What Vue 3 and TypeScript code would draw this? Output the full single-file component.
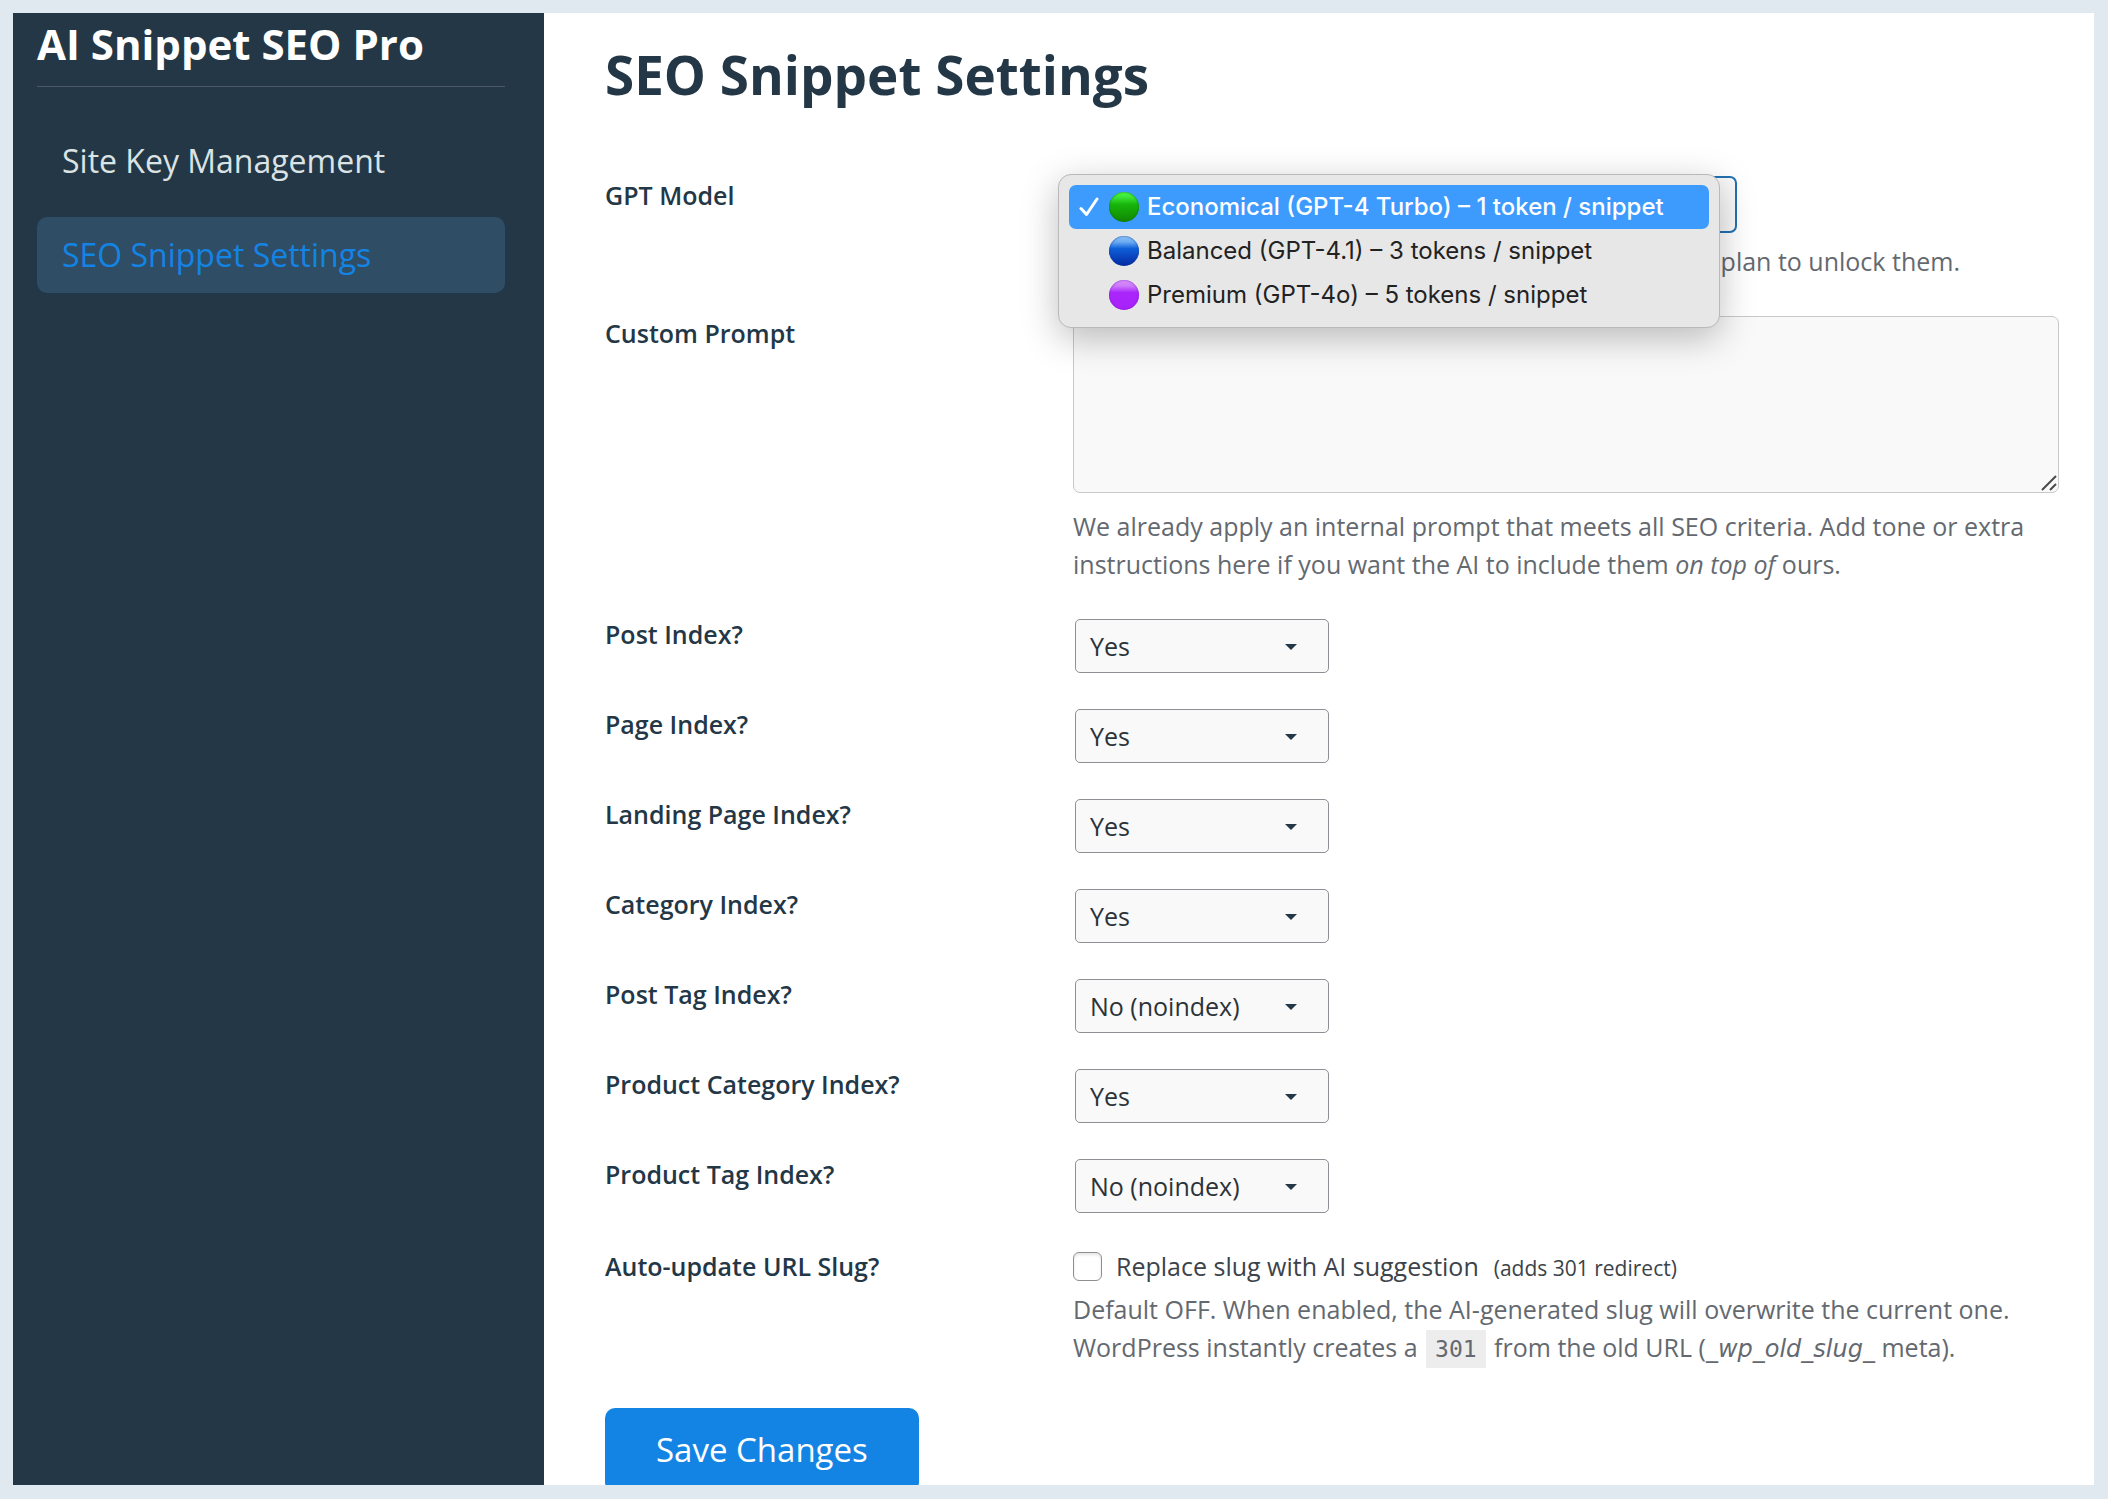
<script setup lang="ts">
import { ref } from 'vue'

interface ModelOption {
  value: string
  label: string
  tone: string
}

interface IndexSetting {
  id: string
  label: string
  value: 'yes' | 'no'
}

const models: ModelOption[] = [
  { value: 'economical', label: 'Economical (GPT-4 Turbo) – 1 token / snippet', tone: 'green' },
  { value: 'balanced', label: 'Balanced (GPT-4.1) – 3 tokens / snippet', tone: 'blue' },
  { value: 'premium', label: 'Premium (GPT-4o) – 5 tokens / snippet', tone: 'purple' },
]

const model = ref('economical')
const prompt = ref('')
const autoSlug = ref(false)

const settings = ref<IndexSetting[]>([
  { id: 'post', label: 'Post Index?', value: 'yes' },
  { id: 'page', label: 'Page Index?', value: 'yes' },
  { id: 'landing', label: 'Landing Page Index?', value: 'yes' },
  { id: 'category', label: 'Category Index?', value: 'yes' },
  { id: 'post-tag', label: 'Post Tag Index?', value: 'no' },
  { id: 'product-category', label: 'Product Category Index?', value: 'yes' },
  { id: 'product-tag', label: 'Product Tag Index?', value: 'no' },
])
</script>

<template>
  <div class="frame">
    <aside class="sidebar">
      <h2 class="brand">AI Snippet SEO Pro</h2>
      <nav class="nav">
        <a href="#site-key" class="nav-link">Site Key Management</a>
        <a href="#settings" class="nav-link active" aria-current="page">SEO Snippet Settings</a>
      </nav>
    </aside>

    <main class="content">
      <h1 class="title">SEO Snippet Settings</h1>

      <form @submit.prevent>
        <div class="row model-row">
          <label class="label" for="gpt-model">GPT Model</label>
          <div class="field">
            <div class="model">
              <select id="gpt-model" v-model="model" class="model-select">
                <option v-for="m in models" :key="m.value" :value="m.value">{{ m.label }}</option>
              </select>
              <ul class="menu" role="listbox" aria-label="GPT Model">
                <li
                  v-for="m in models"
                  :key="m.value"
                  class="option"
                  :class="{ selected: m.value === model }"
                  role="option"
                  :aria-selected="m.value === model"
                  @click="model = m.value"
                >
                  <svg class="check" viewBox="0 0 20 20" aria-hidden="true">
                    <path
                      v-if="m.value === model"
                      d="M2 11.5 L7.5 17.5 L18 2"
                      fill="none"
                      stroke="currentColor"
                      stroke-width="3"
                      stroke-linecap="round"
                      stroke-linejoin="round"
                    />
                  </svg>
                  <span class="dot" :class="m.tone"></span>
                  <span>{{ m.label }}</span>
                </li>
              </ul>
            </div>
            <p class="hint">Balanced and Premium are paid options. Upgrade your plan to unlock them.</p>
          </div>
        </div>

        <div class="row">
          <label class="label" for="custom-prompt">Custom Prompt</label>
          <div class="field">
            <div class="prompt">
              <textarea id="custom-prompt" v-model="prompt"></textarea>
              <svg class="grip" viewBox="0 0 16 16" aria-hidden="true">
                <path d="M1 15 L15 1 M9 15 L15 9" fill="none" stroke="#4a4a4a" stroke-width="2" />
              </svg>
            </div>
            <p class="hint prompt-hint">
              We already apply an internal prompt that meets all SEO criteria. Add tone or extra
              instructions here if you want the AI to include them <em>on top of</em> ours.
            </p>
          </div>
        </div>

        <div v-for="s in settings" :key="s.id" class="row index-row">
          <label class="label" :for="s.id">{{ s.label }}</label>
          <div class="field">
            <div class="choice">
              <select :id="s.id" v-model="s.value">
                <option value="yes">Yes</option>
                <option value="no">No (noindex)</option>
              </select>
              <svg class="caret" viewBox="0 0 12 6" aria-hidden="true">
                <path d="M0 0 H12 L6 6 Z" fill="#233746" />
              </svg>
            </div>
          </div>
        </div>

        <div class="row slug-row">
          <label class="label" for="auto-slug">Auto-update URL Slug?</label>
          <div class="field">
            <label class="toggle">
              <input id="auto-slug" v-model="autoSlug" type="checkbox" />
              <span>Replace slug with AI suggestion</span>
              <small>(adds 301 redirect)</small>
            </label>
            <p class="hint slug-hint">
              Default OFF. When enabled, the AI-generated slug will overwrite the current one.
              WordPress instantly creates a <code>301</code> from the old URL (<em class="meta-key">_wp_old_slug_</em> meta).
            </p>
          </div>
        </div>

        <button type="submit" class="save">Save Changes</button>
      </form>
    </main>
  </div>
</template>

<style>
body {
  background: #e1e9f0;
}
</style>

<style scoped>
* {
  box-sizing: border-box;
}

.frame {
  display: flex;
  height: 100vh;
  padding: 13px 14px 14px 13px;
  overflow: hidden;
  background: #e1e9f0;
  font-family: 'Open Sans', 'Noto Sans', sans-serif;
  font-size: 25px;
  line-height: 38px;
  color: #3c434a;
}

.sidebar {
  flex: 0 0 531px;
  padding: 7px 39px 0 24px;
  background: #233746;
}

.brand {
  margin: 0 0 36px;
  padding-bottom: 18px;
  border-bottom: 1px solid #4b5a66;
  color: #fff;
  font-size: 42px;
  line-height: 48px;
  font-weight: 700;
}

.nav {
  display: flex;
  flex-direction: column;
  gap: 18px;
}

.nav-link {
  padding: 0 25px;
  border-radius: 10px;
  color: #dbe3e5;
  font-size: 32px;
  line-height: 76px;
  text-decoration: none;
}

.nav-link.active {
  background: #2f4d65;
  color: #1484e4;
}

.content {
  flex: 1;
  min-width: 0;
  padding: 30px 35px 0 61px;
  overflow: hidden;
  background: #fff;
}

.title {
  margin: 0 0 69px;
  color: #233746;
  font-size: 53px;
  line-height: 64px;
  font-weight: 700;
}

.row {
  display: grid;
  grid-template-columns: 468px minmax(0, 1fr);
  margin-bottom: 24px;
}

.model-row {
  margin-bottom: 34px;
}

.label {
  color: #233746;
  font-weight: 600;
}

.index-row .label {
  padding-top: 8px;
}

.hint {
  margin: 9px 0 0;
  color: #646970;
}

.model {
  position: relative;
  width: 664px;
}

.model-select {
  display: block;
  width: 100%;
  height: 57px;
  padding: 0 16px;
  border: 2px solid #2271b1;
  border-radius: 7px;
  background: #f9f9f9;
  color: #2c3338;
  font: inherit;
  appearance: none;
}

.menu {
  position: absolute;
  top: -2px;
  left: -15px;
  z-index: 2;
  width: 662px;
  margin: 0;
  padding: 10px;
  border: 1px solid #b9b9b9;
  border-radius: 13px;
  background: #e7e7e7;
  box-shadow: 0 10px 36px rgba(0, 0, 0, 0.26);
  list-style: none;
  color: #222;
  font-family: Inter, sans-serif;
  font-size: 24px;
  line-height: 44px;
}

.option {
  display: flex;
  align-items: center;
  height: 44px;
  padding-left: 10px;
  border-radius: 7px;
  white-space: nowrap;
}

.option.selected {
  background: #3e9bfe;
  color: #fff;
  font-weight: 500;
}

.check {
  width: 20px;
  height: 20px;
  margin-right: 10px;
}

.dot {
  width: 30px;
  height: 30px;
  margin-right: 8px;
  border-radius: 50%;
}

.dot.green {
  background: linear-gradient(#4dfb4a 0%, #3ce336 18%, #17b50c 42%, #128500 100%);
  box-shadow: inset 0 0 2px #0b6e04;
}

.dot.blue {
  background: linear-gradient(#8fc4f8 0%, #6aabf2 20%, #0d5fd8 42%, #0528a0 100%);
  box-shadow: inset 0 0 2px #06389c;
}

.dot.purple {
  background: linear-gradient(#d892fb 0%, #cd7bfa 20%, #a926fb 42%, #a821fa 100%);
  box-shadow: inset 0 0 2px #7a16c0;
}

.prompt {
  position: relative;
  margin-top: 2px;
}

textarea {
  display: block;
  width: 100%;
  height: 177px;
  padding: 10px 16px;
  border: 1px solid #c8c9ca;
  border-radius: 7px;
  background: #f9f9f9;
  color: #2c3338;
  font: inherit;
  resize: none;
}

.grip {
  position: absolute;
  right: 2px;
  bottom: 2px;
  width: 16px;
  height: 16px;
}

.prompt-hint {
  margin-top: 14px;
}

.choice {
  position: relative;
  width: 254px;
  margin: 12px 0 0 2px;
}

.choice select {
  display: block;
  width: 100%;
  height: 54px;
  padding: 0 40px 0 14px;
  border: 1px solid #8c8f94;
  border-radius: 5px;
  background: #f9f9f9;
  color: #2c3338;
  font: inherit;
  appearance: none;
}

.caret {
  position: absolute;
  top: 25px;
  right: 32px;
  width: 12px;
  height: 6px;
  pointer-events: none;
}

.slug-row {
  margin: 34px 0 42px;
}

.toggle {
  display: flex;
  align-items: baseline;
}

.toggle input {
  align-self: center;
  width: 29px;
  height: 29px;
  margin: 0 14px 0 0;
  border: 1px solid #8c8f94;
  border-radius: 6px;
  background: #fff;
  box-shadow: inset 0 2px 3px rgba(0, 0, 0, 0.1);
  appearance: none;
}

.toggle input:checked {
  background: #1484e4;
}

.toggle small {
  margin-left: 15px;
  font-size: 21px;
  line-height: 32px;
}

.slug-hint {
  margin-top: 5px;
}

code {
  margin: 0 2px;
  padding: 6px 9px;
  background: #ededed;
  font-family: 'DejaVu Sans Mono', monospace;
  font-size: 23px;
  line-height: 32px;
}

.meta-key {
  font-family: 'DejaVu Sans', sans-serif;
  font-size: 24px;
  line-height: 32px;
}

.save {
  padding: 0 51px;
  border: 0;
  border-radius: 10px;
  background: #1484e4;
  color: #fff;
  font-family: inherit;
  font-size: 33px;
  line-height: 84px;
}
</style>
